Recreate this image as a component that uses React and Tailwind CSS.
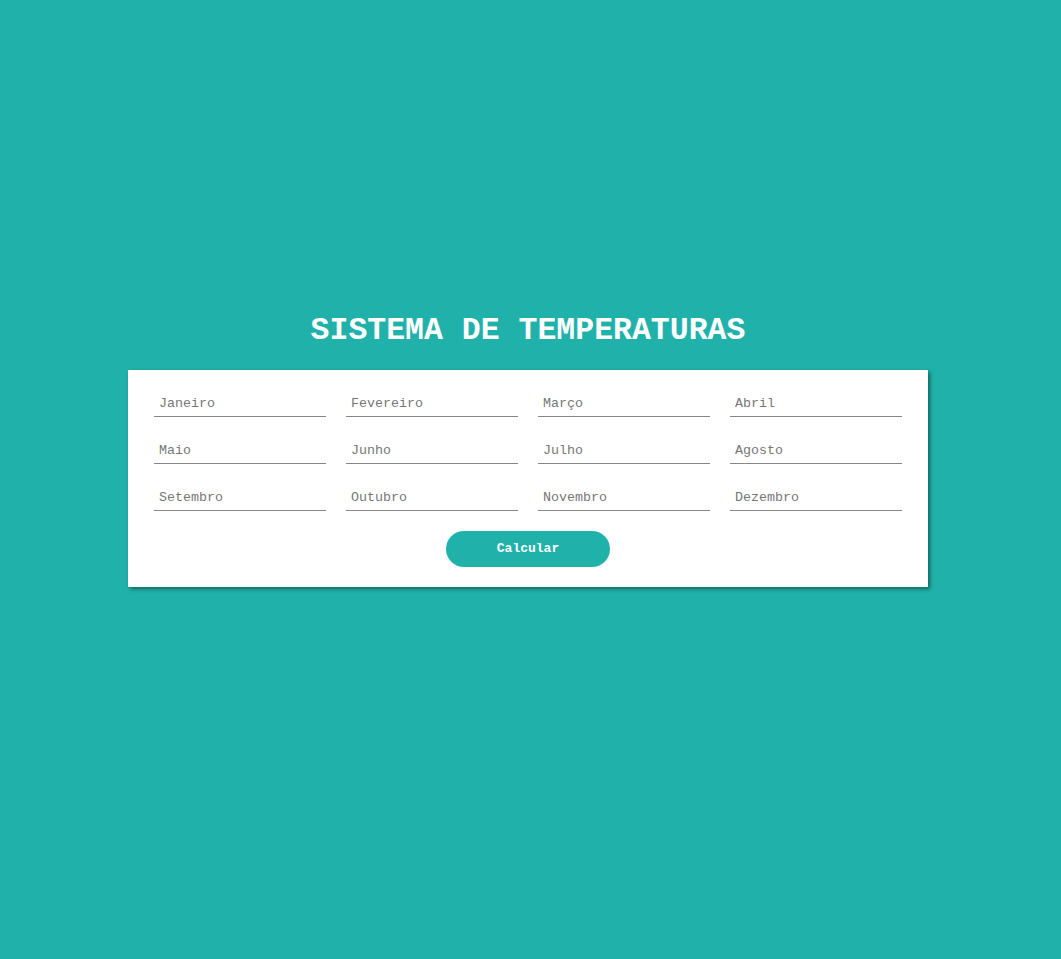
import React from "react";

const MONTHS = [
  "Janeiro", "Fevereiro", "Março", "Abril",
  "Maio", "Junho", "Julho", "Agosto",
  "Setembro", "Outubro", "Novembro", "Dezembro",
];

export default function App() {
  return (
    <div
      className="min-h-screen w-full bg-[#20b2aa] flex flex-col items-center justify-center pb-[60px] pr-[5px]"
      style={{ fontFamily: '"Liberation Mono", "Courier New", monospace' }}
    >
      <h1 className="text-[31.5px] leading-[36px] font-bold text-white mb-[21px]">
        SISTEMA DE TEMPERATURAS
      </h1>

      <div className="w-[800px] bg-white px-[26px] pt-[20px] pb-[20px] shadow-[2px_2px_4px_rgba(0,0,0,0.45)]">
        <div className="grid grid-cols-4 gap-x-[20px] gap-y-[20px]">
          {MONTHS.map((m) => (
            <input
              key={m}
              type="number"
              placeholder={m}
              className="w-[172px] h-[27px] px-[5px] pt-[2px] text-[13.33px] text-[#555] placeholder:text-[#777] border-0 border-b border-[#888] outline-none bg-transparent"
              style={{ fontFamily: '"Liberation Mono", "Courier New", monospace' }}
            />
          ))}
        </div>
        <div className="flex justify-center mt-[20px]">
          <button
            className="w-[164px] h-[36px] rounded-full bg-[#20b2aa] text-white text-[13px] font-bold"
            style={{ fontFamily: '"Liberation Mono", "Courier New", monospace' }}
          >
            Calcular
          </button>
        </div>
      </div>
    </div>
  );
}
